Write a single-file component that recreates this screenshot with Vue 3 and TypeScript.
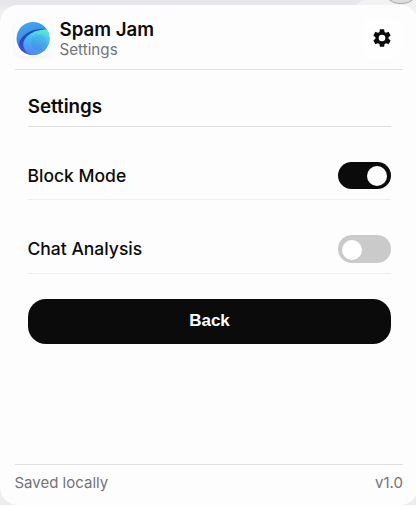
<script setup lang="ts">
import { reactive } from 'vue'

interface Option {
  label: string
  enabled: boolean
}

const options = reactive<Option[]>([
  { label: 'Block Mode', enabled: true },
  { label: 'Chat Analysis', enabled: false },
])
</script>

<template>
  <div class="backdrop">
    <span class="tab-shade"></span>
    <span class="tab-circle"></span>
    <main class="popup">
      <header class="header">
        <div class="logo">
          <svg viewBox="0 0 36 36" width="36" height="36" aria-hidden="true">
            <defs>
              <linearGradient id="disc" x1="0.2" y1="0" x2="0.6" y2="1">
                <stop offset="0" stop-color="#48b0ee" />
                <stop offset="0.5" stop-color="#3988ea" />
                <stop offset="1" stop-color="#3f6be8" />
              </linearGradient>
              <linearGradient id="swoop" x1="0.8" y1="0" x2="0.2" y2="1">
                <stop offset="0" stop-color="#125a9c" />
                <stop offset="0.5" stop-color="#2446bd" />
                <stop offset="1" stop-color="#4052e6" />
              </linearGradient>
              <linearGradient id="wave" x1="0.7" y1="0" x2="0.4" y2="1">
                <stop offset="0" stop-color="#5cebd2" />
                <stop offset="0.45" stop-color="#43b8ef" />
                <stop offset="1" stop-color="#5284f4" />
              </linearGradient>
              <linearGradient id="core" x1="0.7" y1="0" x2="0.3" y2="1">
                <stop offset="0" stop-color="#46c6e8" />
                <stop offset="1" stop-color="#438bec" />
              </linearGradient>
              <clipPath id="round"><circle cx="18" cy="18.5" r="16.5" /></clipPath>
            </defs>
            <g clip-path="url(#round)">
              <rect width="36" height="36" fill="url(#disc)" />
              <path d="M31 9.500C21 7.500 10 12 5 20.500C2.500 26 5 33 10 36H20L12 23C13 16 21 11 31 9.500Z" fill="url(#swoop)" />
              <path d="M31 9.500C20 9.500 10.500 15 8.500 22C7.500 28 11 34 18 36H36V12Z" fill="url(#wave)" />
              <circle cx="24" cy="22.500" r="8" fill="url(#core)" />
            </g>
          </svg>
        </div>
        <div class="brand">
          <h1>Spam Jam</h1>
          <p>Settings</p>
        </div>
        <button class="gear" aria-label="Settings">
          <svg viewBox="0 0 24 24" width="22" height="22" fill="#0b0b0b" aria-hidden="true">
            <path d="M19.140 12.940c.04-.3.060-.61.060-.94 0-.32-.02-.64-.07-.94l2.030-1.580a.49.49 0 0 0 .12-.61l-1.920-3.320a.49.49 0 0 0-.59-.22l-2.390.96a7 7 0 0 0-1.620-.94l-.36-2.540a.48.48 0 0 0-.48-.41h-3.840a.48.48 0 0 0-.47.410l-.36 2.540c-.59.240-1.130.570-1.620.940l-2.390-.96a.48.48 0 0 0-.59.220L2.740 8.870a.48.48 0 0 0 .12.610l2.030 1.580c-.05.300-.09.630-.09.940s.02.640.070.940l-2.030 1.580a.49.49 0 0 0-.12.610l1.920 3.320c.12.220.370.290.590.220l2.390-.96c.5.380 1.030.700 1.620.940l.36 2.540c.05.240.240.410.480.410h3.840c.24 0 .44-.17.470-.41l.36-2.540a6.800 6.800 0 0 0 1.620-.94l2.390.96c.22.080.470 0 .59-.22l1.920-3.320a.48.48 0 0 0-.12-.61zM12 15.600A3.600 3.600 0 1 1 12 8.400a3.600 3.600 0 0 1 0 7.200z" />
          </svg>
        </button>
      </header>

      <section class="content">
        <h2>Settings</h2>
        <label v-for="option in options" :key="option.label" class="row">
          <span>{{ option.label }}</span>
          <button
            class="switch"
            :class="{ on: option.enabled }"
            role="switch"
            :aria-checked="option.enabled"
            :aria-label="option.label"
            @click="option.enabled = !option.enabled"
          ><i></i></button>
        </label>
        <button class="back">Back</button>
      </section>

      <footer class="footer">
        <span>Saved locally</span>
        <span>v1.0</span>
      </footer>
    </main>
  </div>
</template>

<style>
body {
  overflow: hidden;
  background: #fff;
}
</style>

<style scoped>
* {
  box-sizing: border-box;
}
.backdrop {
  position: relative;
  width: 416px;
  height: 505px;
  padding-top: 5px;
  overflow: hidden;
  background: linear-gradient(#e7e6eb 0 5px, #f0f0f1 10px, #ededee 100%);
}
.tab-shade {
  position: absolute;
  top: 0;
  left: 354px;
  width: 62px;
  height: 30px;
  border-top-left-radius: 12px;
  background: #f3f1f4;
}
.tab-circle {
  position: absolute;
  top: -28px;
  left: 384px;
  width: 34px;
  height: 32px;
  border: 1px solid #aaa;
  border-radius: 15px;
  background: #ddd;
}
.popup {
  position: relative;
  display: flex;
  flex-direction: column;
  width: 418px;
  height: 500px;
  padding: 0 15px;
  border-radius: 18px;
  background: #fdfdfd;
  font-family: Inter, sans-serif;
  color: #0b0b0b;
}
h1,
h2,
p {
  margin: 0;
}
button {
  padding: 0;
  border: 0;
}
.header {
  display: flex;
  align-items: center;
  height: 65px;
  padding-top: 2px;
  border-bottom: 1px solid #e1e1e2;
}
.logo {
  width: 36px;
  height: 36px;
  border-radius: 9px;
  background: #fff;
  box-shadow: 0 2px 6px rgb(0 0 0 / 5%);
}
.logo svg {
  display: block;
}
.brand {
  padding-top: 2px;
  margin-left: 8.5px;
}
h1 {
  font-size: 18.7px;
  font-weight: 600;
  line-height: 20px;
}
.brand p {
  font-size: 15.2px;
  line-height: 19px;
  color: #737377;
}
.gear {
  display: grid;
  place-items: center;
  width: 40px;
  height: 40px;
  margin-right: 1px;
  margin-left: auto;
  border-radius: 12px;
  background: #fefefe;
}
.content {
  display: flex;
  flex-direction: column;
  padding: 25px 12px 0 13px;
}
h2 {
  height: 32px;
  border-bottom: 1px solid #dfdfe0;
  font-size: 18.8px;
  font-weight: 600;
  line-height: 24px;
  text-indent: -0.3px;
}
.row {
  display: flex;
  align-items: center;
  justify-content: space-between;
  height: 73px;
  padding-top: 25px;
  border-bottom: 1px solid #ededee;
  font-size: 17.5px;
  font-weight: 500;
}
.row span {
  margin-left: -0.5px;
}
.row + .row {
  height: 74px;
}
.row + .row span {
  padding-bottom: 2px;
}
.switch {
  width: 53px;
  height: 27px;
  padding: 3px 4px;
  border-radius: 14px;
  background: #cacaca;
}
.row + .row .switch {
  height: 28px;
  padding-top: 4px;
}
.switch i {
  display: block;
  width: 20px;
  height: 20px;
  border-radius: 50%;
  background: #fff;
}
.switch.on {
  background: #0b0b0b;
}
.switch.on i {
  margin-left: 25px;
}
.back {
  height: 45px;
  padding-bottom: 2px;
  margin-top: 25px;
  border-radius: 18px;
  background: #0b0b0b;
  color: #fff;
  font: bold 17px 'Liberation Sans', sans-serif;
}
.footer {
  display: flex;
  justify-content: space-between;
  height: 41px;
  margin-top: auto;
  padding-top: 8px;
  border-top: 1px solid #dedee0;
  font-size: 15px;
  line-height: 19px;
  color: #737377;
}
.footer span {
  margin-left: -0.5px;
}
</style>
